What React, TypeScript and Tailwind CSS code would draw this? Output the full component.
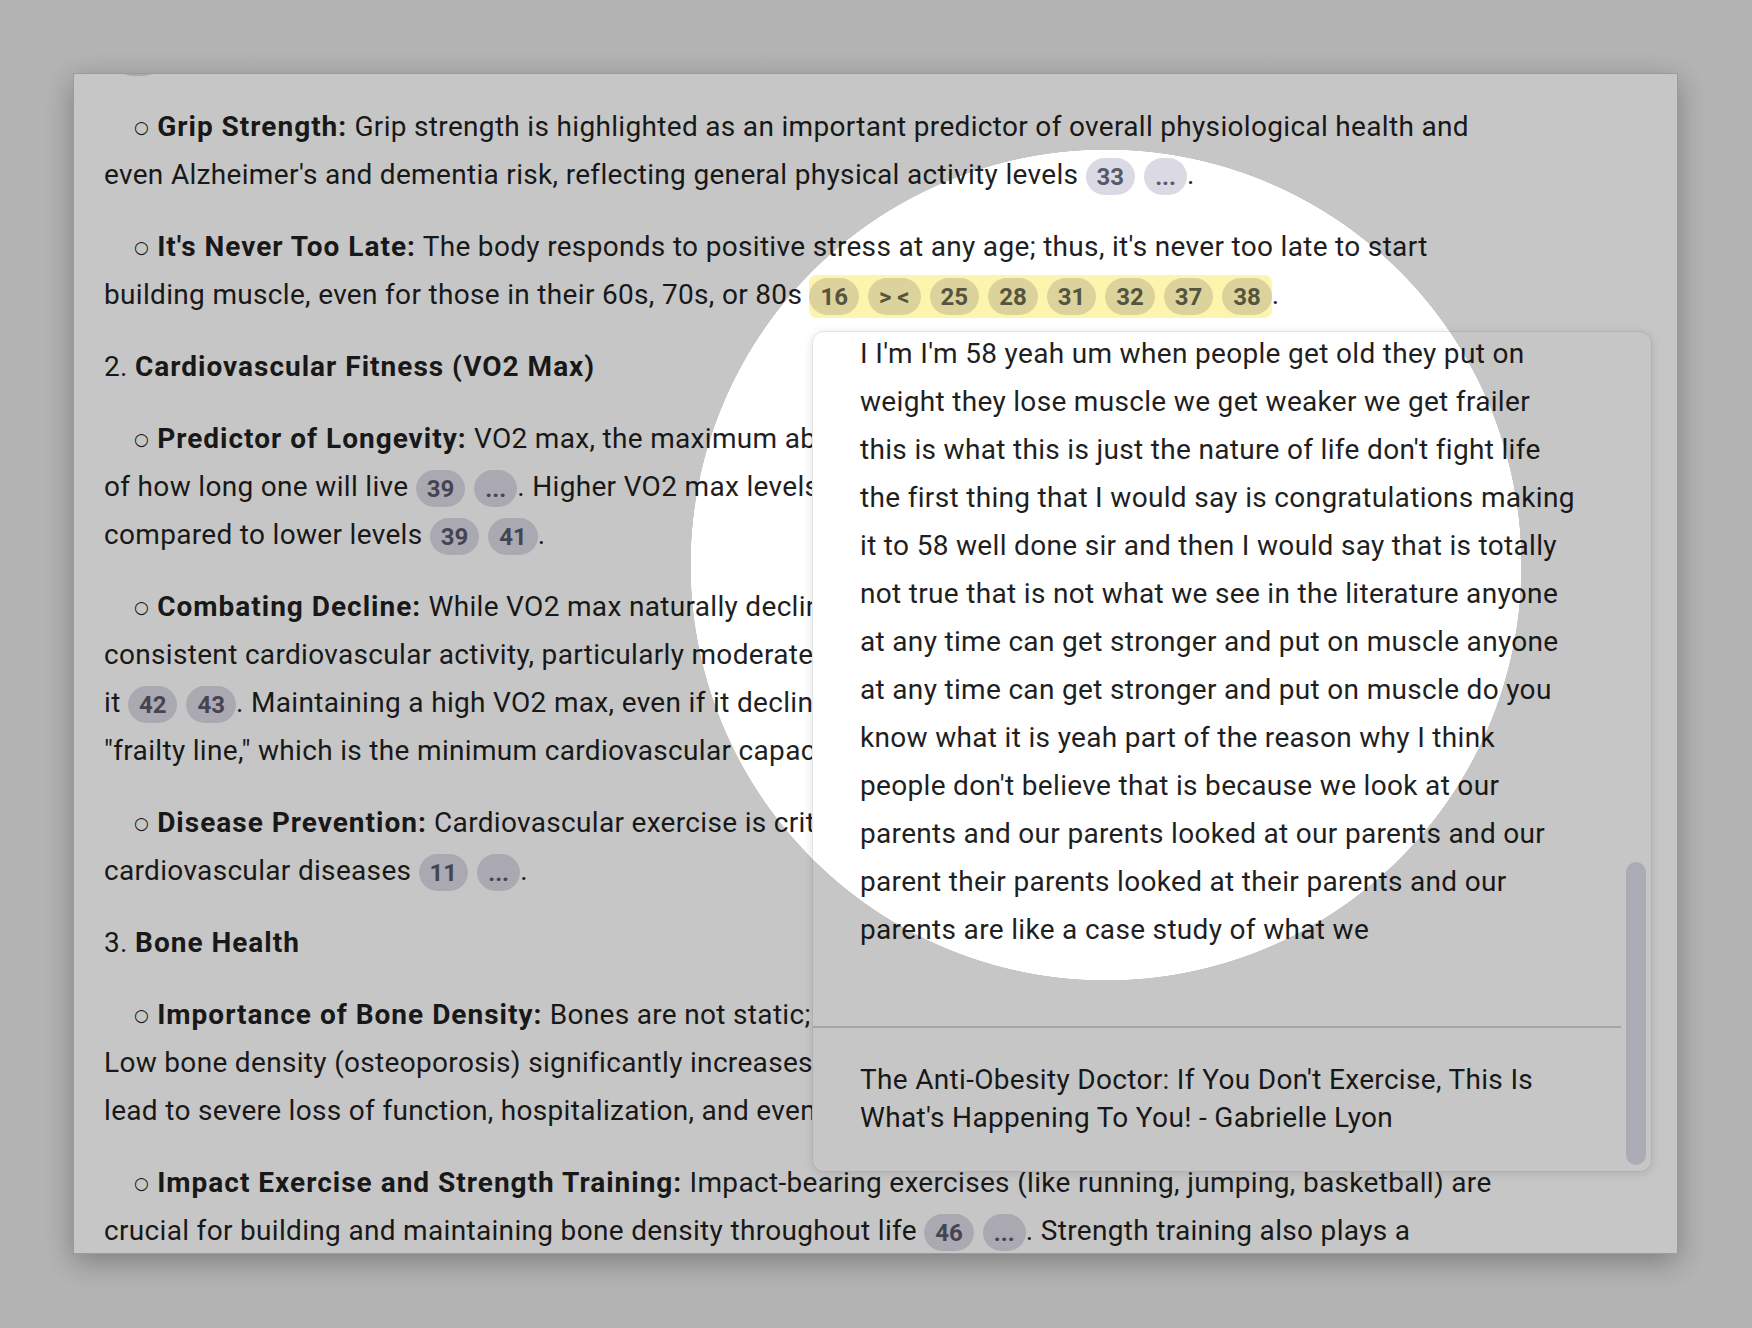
import React from "react";

type Seg = string | { b: string } | { chips: string[]; hl?: boolean };

const Chips = ({ items, hl }: { items: string[]; hl?: boolean }) => (
  <span
    className={
      hl
        ? "inline-flex gap-[9px] rounded-[8px] bg-[#fdf4ad] py-[3px] align-middle"
        : "inline-flex gap-[9px] align-middle"
    }
  >
    {items.map((c, i) => (
      <span
        key={i}
        className={
          "inline-flex h-[37px] min-w-[43px] items-center justify-center rounded-full px-[11px] text-[24px] font-bold leading-none tracking-normal " +
          (hl ? "bg-[#dcd29b] text-[#55543f]" : "bg-[#dbdae4] text-[#585869]")
        }
      >
        {c}
      </span>
    ))}
  </span>
);

const Line = ({ segs, bullet }: { segs: Seg[]; bullet?: boolean }) => (
  <div className="h-[48px] overflow-hidden whitespace-nowrap leading-[48px]">
    {bullet && (
      <span className="ml-[30px] mr-[8px] align-[3px] font-['DejaVu_Sans',sans-serif] text-[17px]">○</span>
    )}
    {segs.map((s, i) => {
      if (typeof s === "string") return <span key={i}>{s}</span>;
      if ("b" in s)
        return (
          <strong key={i} className="font-bold tracking-[1px]">
            {s.b}
          </strong>
        );
      return <Chips key={i} items={s.chips} hl={s.hl} />;
    })}
  </div>
);

const paragraphs: { bullet?: boolean; lines: Seg[][] }[] = [
  {
    bullet: true,
    lines: [
      [{ b: "Grip Strength:" }, " Grip strength is highlighted as an important predictor of overall physiological health and"],
      ["even Alzheimer's and dementia risk, reflecting general physical activity levels ", { chips: ["33", "..."] }, "."],
    ],
  },
  {
    bullet: true,
    lines: [
      [{ b: "It's Never Too Late:" }, " The body responds to positive stress at any age; thus, it's never too late to start"],
      [
        "building muscle, even for those in their 60s, 70s, or 80s ",
        { chips: ["16", "> <", "25", "28", "31", "32", "37", "38"], hl: true },
        ".",
      ],
    ],
  },
  { lines: [["2. ", { b: "Cardiovascular Fitness (VO2 Max)" }]] },
  {
    bullet: true,
    lines: [
      [{ b: "Predictor of Longevity:" }, " VO2 max, the maximum ability to use oxygen, predicts"],
      ["of how long one will live ", { chips: ["39", "..."] }, ". Higher VO2 max levels lower mortality"],
      ["compared to lower levels ", { chips: ["39", "41"] }, "."],
    ],
  },
  {
    bullet: true,
    lines: [
      [{ b: "Combating Decline:" }, " While VO2 max naturally declines with age,"],
      ["consistent cardiovascular activity, particularly moderate-intensity work, builds"],
      ["it ", { chips: ["42", "43"] }, ". Maintaining a high VO2 max, even if it declines, keeps"],
      ['"frailty line," which is the minimum cardiovascular capacity needed.'],
    ],
  },
  {
    bullet: true,
    lines: [
      [{ b: "Disease Prevention:" }, " Cardiovascular exercise is critical for reducing"],
      ["cardiovascular diseases ", { chips: ["11", "..."] }, "."],
    ],
  },
  { lines: [["3. ", { b: "Bone Health" }]] },
  {
    bullet: true,
    lines: [
      [{ b: "Importance of Bone Density:" }, " Bones are not static; they adapt to load."],
      ["Low bone density (osteoporosis) significantly increases fracture risk, which can"],
      ["lead to severe loss of function, hospitalization, and even death."],
    ],
  },
  {
    bullet: true,
    lines: [
      [{ b: "Impact Exercise and Strength Training:" }, " Impact-bearing exercises (like running, jumping, basketball) are"],
      ["crucial for building and maintaining bone density throughout life ", { chips: ["46", "..."] }, ". Strength training also plays a"],
    ],
  },
];

const transcript = [
  "I I'm I'm 58 yeah um when people get old they put on",
  "weight they lose muscle we get weaker we get frailer",
  "this is what this is just the nature of life don't fight life",
  "the first thing that I would say is congratulations making",
  "it to 58 well done sir and then I would say that is totally",
  "not true that is not what we see in the literature anyone",
  "at any time can get stronger and put on muscle anyone",
  "at any time can get stronger and put on muscle do you",
  "know what it is yeah part of the reason why I think",
  "people don't believe that is because we look at our",
  "parents and our parents looked at our parents and our",
  "parent their parents looked at their parents and our",
  "parents are like a case study of what we",
];

const SourcePopup = () => (
  <div className="absolute left-[738px] top-[257px] flex h-[841px] w-[840px] overflow-hidden rounded-[12px] border border-[#e4e4e4] bg-white shadow-[0_2px_10px_rgba(0,0,0,0.12)]">
    <div className="flex w-[808px] flex-col">
      <div className="h-[694px] overflow-hidden pl-[47px]">
        <div className="-mt-[2px] leading-[48px]">
          {transcript.map((t, i) => (
            <div key={i} className="whitespace-nowrap">
              {t}
            </div>
          ))}
        </div>
      </div>
      <div className="h-[2px] bg-[#d4d4d4]" />
      <div className="pl-[47px] pt-[33px] leading-[38px]">
        The Anti-Obesity Doctor: If You Don't Exercise, This Is
        <br />
        What's Happening To You! - Gabrielle Lyon
      </div>
    </div>
    <div className="flex flex-1 flex-col justify-end pb-[6px] pl-[5px]">
      <div className="h-[303px] w-[20px] rounded-full bg-[#dcdde9]" />
    </div>
  </div>
);

export default function App() {
  return (
    <div className="relative h-[1328px] w-full overflow-hidden bg-[#e7e7e7] p-[73px] pb-[74px] pr-[74px] font-['Roboto',sans-serif] text-[28px] tracking-[0.32px] text-[#1f1f1f]">
      <div className="relative h-full overflow-hidden border border-[#c8c8c8] bg-white pl-[30px] shadow-[0_8px_28px_rgba(0,0,0,0.3)]">
        <div className="flex h-[29px] flex-col">
          <div className="-mt-[35px] ml-[10px] h-[37px] w-[48px] shrink-0 rounded-full bg-[#dbdae4]" />
        </div>
        {paragraphs.map((p, i) => (
          <div key={i} className="mb-[24px]">
            {p.lines.map((l, j) => (
              <Line key={j} segs={l} bullet={p.bullet && j === 0} />
            ))}
          </div>
        ))}
        <SourcePopup />
      </div>
      <div className="pointer-events-none absolute inset-0 bg-[radial-gradient(circle_at_1106px_565px,transparent_415px,rgba(0,0,0,0.225)_415.5px)]" />
    </div>
  );
}
